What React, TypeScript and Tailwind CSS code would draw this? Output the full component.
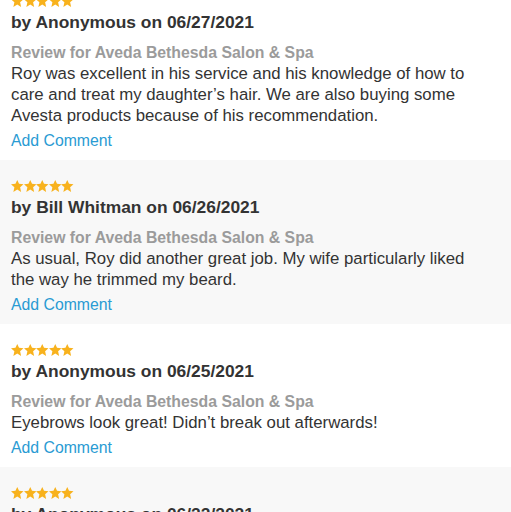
import React from 'react';

interface Review {
  author: string;
  date: string;
  salon: string;
  text: string;
}

const reviews: Review[] = [
  {
    author: 'Anonymous',
    date: '06/27/2021',
    salon: 'Aveda Bethesda Salon & Spa',
    text: 'Roy was excellent in his service and his knowledge of how to care and treat my daughter\u2019s hair. We are also buying some Avesta products because of his recommendation.',
  },
  {
    author: 'Bill Whitman',
    date: '06/26/2021',
    salon: 'Aveda Bethesda Salon & Spa',
    text: 'As usual, Roy did another great job. My wife particularly liked the way he trimmed my beard.',
  },
  {
    author: 'Anonymous',
    date: '06/25/2021',
    salon: 'Aveda Bethesda Salon & Spa',
    text: 'Eyebrows look great! Didn\u2019t break out afterwards!',
  },
  {
    author: 'Anonymous',
    date: '06/22/2021',
    salon: 'Aveda Bethesda Salon & Spa',
    text: 'Great as always.',
  },
];

const Star: React.FC = () => (
  <svg width="12.5" height="12" viewBox="0 0 24 23" fill="#f8b21d">
    <polygon points="12,0 15.4,7.4 24,8.3 17.5,14 19.4,22.8 12,18.3 4.6,22.8 6.5,14 0,8.3 8.6,7.4" />
  </svg>
);

const ReviewCard: React.FC<{ review: Review; shaded: boolean }> = ({ review, shaded }) => (
  <div className={`pl-[11px] pr-[22px] pt-[20px] pb-[9.5px] ${shaded ? 'bg-[#f8f8f8]' : 'bg-white'}`}>
    <div className="flex h-[12px]">
      {[0, 1, 2, 3, 4].map(i => (
        <Star key={i} />
      ))}
    </div>
    <div className="mt-[3px] text-[17.4px] leading-[24px] font-bold text-[#333333] whitespace-nowrap">
      by {review.author} on {review.date}
    </div>
    <div className="mt-[7.5px] text-[15.8px] leading-[21px] font-bold text-[#9b9b9b] whitespace-nowrap">
      Review for {review.salon}
    </div>
    <p className="text-[16.8px] leading-[21px] text-[#333333]">{review.text}</p>
    <div className="mt-[4px] text-[15.8px] leading-[21px] text-[#2a9bd3]">Add Comment</div>
  </div>
);

export default function App() {
  return (
    <div
      className="h-[512px] w-[511px] overflow-hidden bg-white"
      style={{ fontFamily: '"Liberation Sans", Arial, sans-serif' }}
    >
      <div className="-mt-[25px]">
        {reviews.map((r, i) => (
          <ReviewCard key={i} review={r} shaded={i % 2 === 1} />
        ))}
      </div>
    </div>
  );
}
